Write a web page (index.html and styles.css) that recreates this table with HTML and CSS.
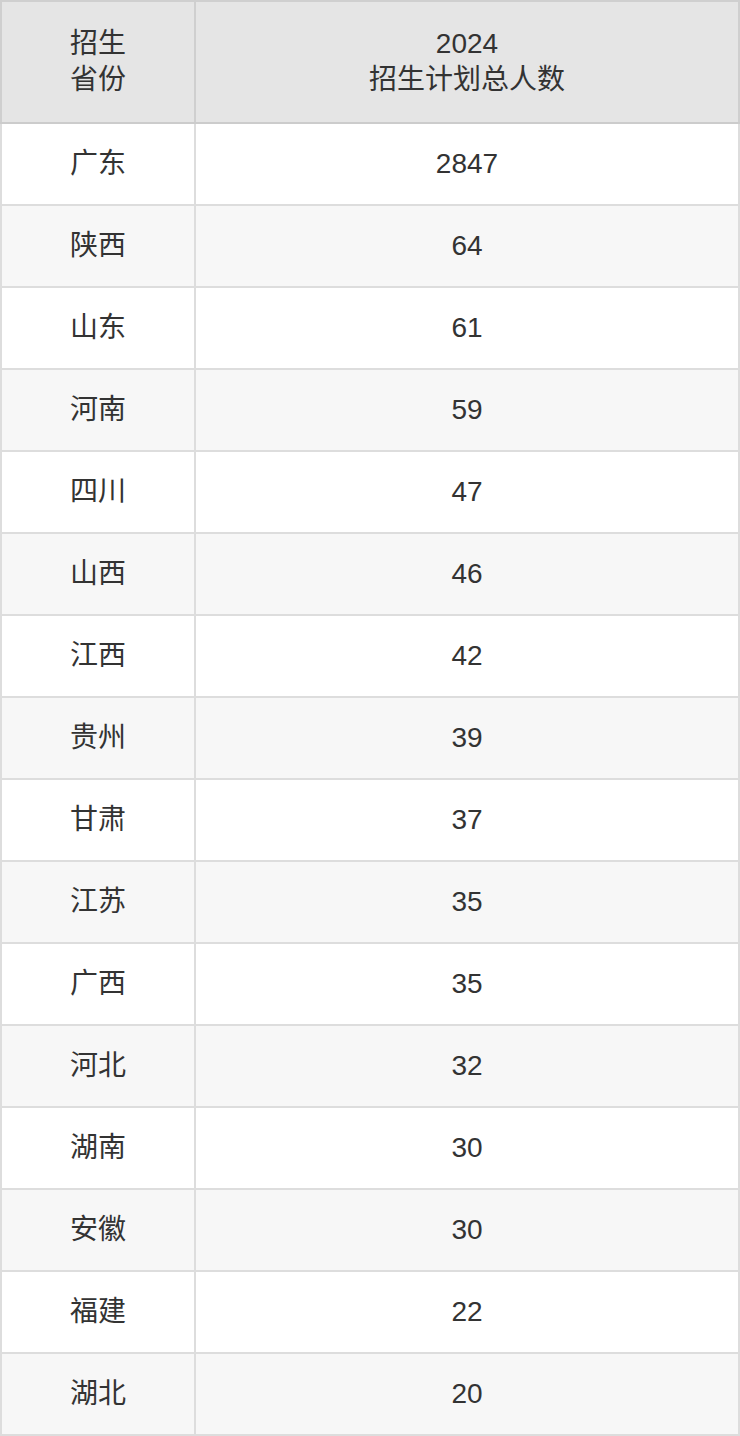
FILE: index.html
```html
<!DOCTYPE html>
<html lang="zh-CN">
<head>
<meta charset="utf-8">
<title>招生计划</title>
<link rel="stylesheet" href="styles.css">
</head>
<body>
<table class="plan">
  <colgroup>
    <col class="col-prov">
    <col class="col-num">
  </colgroup>
  <thead>
    <tr>
      <th>招生<br>省份</th>
      <th>2024<br>招生计划总人数</th>
    </tr>
  </thead>
  <tbody>
    <tr><td>广东</td><td>2847</td></tr>
    <tr><td>陕西</td><td>64</td></tr>
    <tr><td>山东</td><td>61</td></tr>
    <tr><td>河南</td><td>59</td></tr>
    <tr><td>四川</td><td>47</td></tr>
    <tr><td>山西</td><td>46</td></tr>
    <tr><td>江西</td><td>42</td></tr>
    <tr><td>贵州</td><td>39</td></tr>
    <tr><td>甘肃</td><td>37</td></tr>
    <tr><td>江苏</td><td>35</td></tr>
    <tr><td>广西</td><td>35</td></tr>
    <tr><td>河北</td><td>32</td></tr>
    <tr><td>湖南</td><td>30</td></tr>
    <tr><td>安徽</td><td>30</td></tr>
    <tr><td>福建</td><td>22</td></tr>
    <tr><td>湖北</td><td>20</td></tr>
  </tbody>
</table>
</body>
</html>
```

FILE: styles.css
```css
html, body {
  margin: 0;
  padding: 0;
  background: #ffffff;
}

.plan {
  width: 740px;
  table-layout: fixed;
  border-collapse: collapse;
  font-family: "Liberation Sans", "Noto Sans CJK SC", sans-serif;
  font-size: 28px;
  color: #333333;
  text-align: center;
}

.col-prov { width: 194px; }

.plan th,
.plan td {
  padding: 0;
  vertical-align: middle;
  text-align: center;
  font-weight: normal;
}

.plan th {
  height: 120px;
  line-height: 36px;
  background: #e5e5e5;
  border: 2px solid #cfcfcf;
}

.plan td {
  height: 80px;
  line-height: 36px;
  border: 2px solid #dddddd;
}

.plan thead th {
  border-bottom-color: #cccccc;
}

.plan tbody tr:nth-child(even) td {
  background: #f7f7f7;
}
```
